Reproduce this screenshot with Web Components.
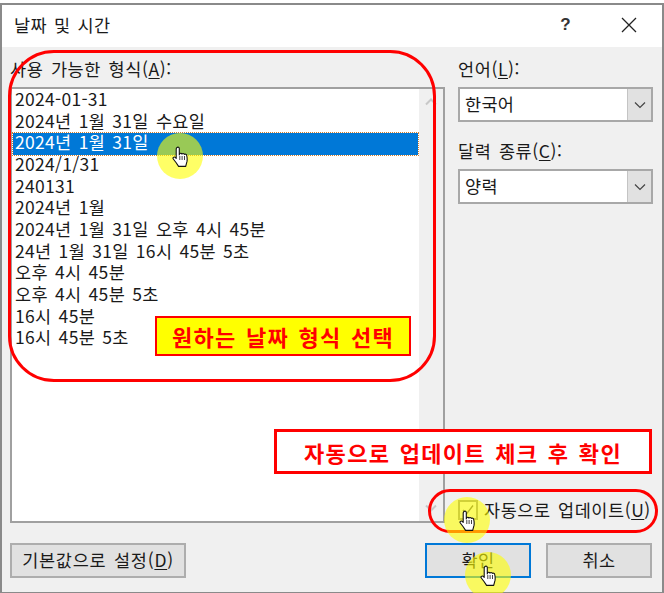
<!DOCTYPE html>
<html lang="ko"><head><meta charset="utf-8">
<style>
html,body{margin:0;padding:0;background:#fff}
body{width:664px;height:593px;overflow:hidden;font:17.5px/22px "Noto Sans CJK KR","Noto Sans",sans-serif;letter-spacing:.3px;word-spacing:2px;color:#1a1a1a}
</style></head><body>
<date-dialog></date-dialog>
<template id="tDialog"><style>
:host{display:flex;flex-direction:column;position:relative;box-sizing:border-box;width:664px;height:593px;padding-top:3px;overflow:hidden;background:#fff}
.frame{flex:1;display:flex;flex-direction:column;border:solid #8a8a8a;border-width:2px 2px 1px 2px;background:#f0f0f0;min-height:0}
.title{height:42px;flex:none;background:#fff;display:flex;align-items:center;padding:0 12px 2px;box-sizing:border-box;justify-content:space-between}
.ctl{display:flex;align-items:center;gap:50px;padding-right:13px}
.q{font:bold 17px "Liberation Sans",sans-serif;color:#333}
.main{flex:1;display:grid;grid-template-columns:435px 195px;column-gap:13px;padding:11px 0 0 8px;min-height:0}
.left,.right{display:flex;flex-direction:column;min-height:0}
.lab{height:29px;line-height:22px;white-space:nowrap;letter-spacing:.6px}
u{text-underline-offset:2px}
.right date-combo+.lab{margin-top:18px}
.bottom{display:flex;flex:none;height:35px;padding:20px 10px 14px 8px;align-items:stretch}
.sp{flex:1}
.bottom x-btn+x-btn{margin-left:15px}
.chk{display:flex;align-items:center;margin-top:auto;height:20px;margin-bottom:3px;gap:6px;white-space:nowrap;letter-spacing:.55px}
.box{width:16px;height:16px;border:2px solid #8c8c8c;background:#f6f6f6;flex:none;display:flex;align-items:center;justify-content:center}
</style>
<div class="frame">
 <div class="title"><span>날짜 및 시간</span>
  <div class="ctl"><span class="q">?</span><svg width="16" height="16" viewBox="0 0 16 16"><path d="M1 1L15 15M15 1L1 15" stroke="#222" stroke-width="1.3" fill="none"/></svg></div></div>
 <div class="main">
  <div class="left"><div class="lab">사용 가능한 형식(<u>A</u>):</div><date-list></date-list></div>
  <div class="right">
   <div class="lab">언어(<u>L</u>):</div><date-combo>한국어</date-combo>
   <div class="lab">달력 종류(<u>C</u>):</div><date-combo>양력</date-combo>
   <div class="chk"><span class="box"><svg width="14" height="14" viewBox="0 0 14 14"><path d="M2 7l3.5 4L12 2.500" stroke="#555" stroke-width="1.400" fill="none"/></svg></span><span>자동으로 업데이트(<u>U</u>)</span></div>
  </div>
 </div>
 <div class="bottom"><x-btn style="width:176px;letter-spacing:.75px">기본값으로 설정(<u>D</u>)</x-btn><span class="sp"></span><x-btn primary style="width:106px">확인</x-btn><x-btn style="width:106px">취소</x-btn></div>
</div>
<slot></slot>
<note-ring style="left:8px;top:50px;width:428px;height:332px;--r:46px"></note-ring>
<note-box style="left:155px;top:316px;width:256px;height:40px;background:#ff0;--bw:2px">원하는 날짜 형식 선택</note-box>
<note-box style="left:274px;top:429px;width:378px;height:45px;background:#fff;--bw:3px">자동으로 업데이트 체크 후 확인</note-box>
<note-ring style="left:428px;top:489px;width:230px;height:44px;--r:22px"></note-ring>
<hand-spot style="left:157px;top:133px"></hand-spot>
<hand-spot style="left:444px;top:497px" ></hand-spot>
<hand-spot style="left:465px;top:552px"></hand-spot>
</template>

<template id="tList"><style>
:host{display:flex;flex:1;box-sizing:border-box;border:2px solid #a0a0a0;background:#fff;min-height:0;width:435px}
.items{flex:1;padding:1px 1px 0 1px;min-width:0}
.sb{width:24px;flex:none;background:#f0f0f0;display:flex;flex-direction:column;justify-content:space-between;align-items:center;padding:9px 0 9px}
.sb svg{display:block}
</style><div class="items"><slot></slot></div>
<div class="sb"><svg width="12" height="8" viewBox="0 0 12 8"><path d="M1 6.500L6 1.500L11 6.500" stroke="#c8c8c8" stroke-width="2" fill="none"/></svg><svg width="12" height="8" viewBox="0 0 12 8"><path d="M1 1.500L6 6.500L11 1.500" stroke="#c8c8c8" stroke-width="2" fill="none"/></svg></div>
</template>

<template id="tItem"><style>
:host{display:block;box-sizing:border-box;height:21.67px;line-height:18px;padding-left:2px;white-space:nowrap}
:host([selected]){background:#0078d7;color:#fff;outline:1px dotted #d08030;outline-offset:0}
</style><slot></slot></template>

<template id="tCombo"><style>
:host{display:flex;box-sizing:border-box;height:35px;border:2px solid #a8a8a8;background:#fff;flex:none}
.v{flex:1;padding-left:5px;line-height:29px}
.b{width:23px;background:#e1e1e1;border-left:1px solid #c4c4c4;display:flex;align-items:center;justify-content:center}
</style><div class="v"><slot></slot></div><div class="b"><svg width="12" height="8" viewBox="0 0 12 8"><path d="M1 1.500L6 6.500L11 1.500" stroke="#444" stroke-width="1.200" fill="none"/></svg></div></template>

<template id="tBtn"><style>
:host{display:flex;box-sizing:border-box;align-items:center;justify-content:center;background:#e1e1e1;border:2px solid #adadad;white-space:nowrap;padding-bottom:2px}
:host([primary]){border-color:#0078d7}
</style><slot></slot></template>

<template id="tRing"><style>
:host{position:absolute;box-sizing:border-box;border:3px solid #f00;border-radius:var(--r)}
</style></template>

<template id="tBox"><style>
:host{position:absolute;box-sizing:border-box;border:var(--bw) solid #f00;display:flex;align-items:center;justify-content:center;color:#f00;font-weight:700;font-size:22px;letter-spacing:1.300px;word-spacing:2px;white-space:nowrap}
</style><slot></slot></template>

<template id="tSpot"><style>
:host{position:absolute;width:46px;height:46px;border-radius:50%;background:rgba(255,255,0,.6)}
svg{position:absolute;left:15px;top:13px}
</style><svg width="18" height="24" viewBox="0 0 18 24"><path d="M5 1.500c1-.8 2.300-.2 2.300 1.200V9l.2-1c.5-1 2-1 2.400.1.6-.9 2.100-.8 2.400.3.8-.6 2.200-.2 2.400 1 .5 2 .6 4 .3 6l-1.300 5H6.600L4 16.500 1.300 13c-.9-1.200.6-2.600 1.800-1.700l1.100 1V3c0-.6.3-1.100.8-1.500z" fill="#fff" stroke="#111" stroke-width="1.100" stroke-linejoin="round"/><path d="M7.800 14v-4M10.100 14v-4M12.500 14v-4" stroke="#111" stroke-width=".8"/></svg></template>

<script>
function def(n,t){customElements.define(n,class extends HTMLElement{constructor(){super();this.attachShadow({mode:'open'}).appendChild(document.getElementById(t).content.cloneNode(true));}});}
def('date-item','tItem');def('date-combo','tCombo');def('x-btn','tBtn');def('note-ring','tRing');def('note-box','tBox');def('hand-spot','tSpot');
customElements.define('date-list',class extends HTMLElement{constructor(){super();this.attachShadow({mode:'open'}).appendChild(document.getElementById('tList').content.cloneNode(true));
 ['2024-01-31','2024년 1월 31일 수요일','2024년 1월 31일','2024/1/31','240131','2024년 1월','2024년 1월 31일 오후 4시 45분','24년 1월 31일 16시 45분 5초','오후 4시 45분','오후 4시 45분 5초','16시 45분','16시 45분 5초'].forEach((s,i)=>{const e=document.createElement('date-item');e.textContent=s;if(i==2)e.setAttribute('selected','');this.appendChild(e);});}});
def('date-dialog','tDialog');
</script>
</body></html>
